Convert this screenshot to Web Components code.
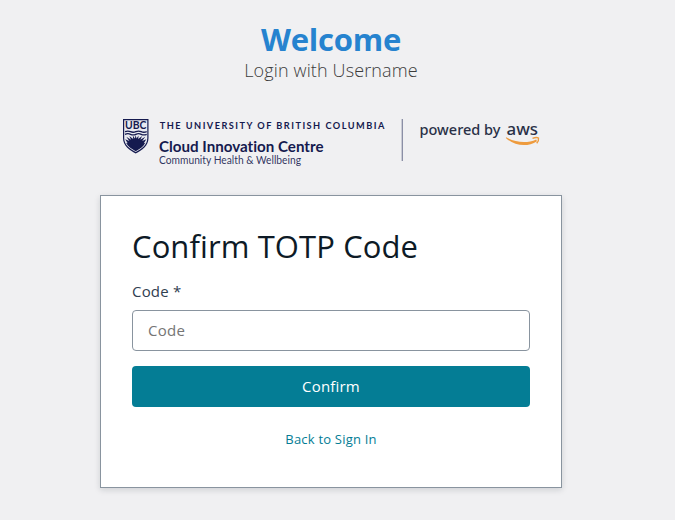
<!DOCTYPE html>
<html lang="en"><head><meta charset="utf-8"><title>Confirm TOTP Code</title>
<style>html,body{margin:0;height:100%;overflow:hidden}body{background:#f0f0f2;font-family:"Open Sans","Noto Sans",sans-serif}</style></head>
<body>
<login-page>
  <page-heading slot="head"><span>Welcome</span><span slot="sub">Login with Username</span></page-heading>
  <brand-banner slot="brand"></brand-banner>
  <auth-card>
    <span slot="title">Confirm TOTP Code</span>
    <text-field label="Code *" placeholder="Code"></text-field>
    <primary-button>Confirm</primary-button>
    <link-button>Back to Sign In</link-button>
  </auth-card>
</login-page>
<script>
const define=(name,html,setup)=>customElements.define(name,class extends HTMLElement{
  constructor(){super();this.attachShadow({mode:'open'}).innerHTML=html;}
  connectedCallback(){if(setup)setup(this,this.shadowRoot);}
});
define('login-page',`<style>
:host{display:flex;flex-direction:column;align-items:center;width:662px;height:520px;box-sizing:border-box;padding-top:20px}
</style><slot name="head"></slot><slot name="brand"></slot><slot></slot>`);
define('page-heading',`<style>
:host{display:block;text-align:center;height:90px}
h1{margin:0;font-size:31px;line-height:39px;font-weight:700;color:#2683cf;letter-spacing:-.2px}
p{margin:0;font-size:18px;line-height:23px;font-weight:300;color:#3c3c3c;letter-spacing:.13px}
</style><h1><slot></slot></h1><p><slot name="sub"></slot></p>`);
define('brand-banner',`<style>
:host{display:block;width:432px;height:85px}svg{display:block}
.u{fill:#151a4f;font-family:Lato,"Open Sans",sans-serif;font-variant-ligatures:none}.a{fill:#2a3147;font-family:"Noto Sans","Open Sans",sans-serif}
</style><svg width="430" height="60" viewBox="115 110 430 60">
<path d="M123 119H148.500V138C148.500 146 142 150 135.700 153.500C129.500 150 123 146 123 138Z" fill="#151a4f"/>
<path d="M124.200 120.200H147.300V138C147.300 145 141.500 148.900 135.700 152C130 148.900 124.200 145 124.200 138Z" fill="#e9eaf0"/>
<text class="u" x="125" y="129" font-size="10.500" font-weight="700" textLength="21.400" lengthAdjust="spacingAndGlyphs">UBC</text>
<g fill="none" stroke="#151a4f" stroke-width="1.300"><path d="M125 131.700Q128 130.600 130.500 131.700T135.800 131.700T141.200 131.700T146.700 131.700"/><path d="M125 134.300Q128 133.100 130.500 134.300T135.800 134.300T141.200 134.300T146.700 134.300"/></g>
<path fill="#151a4f" d="M125.200 139.200L129.300 141L126.300 136.800L131 139.700L129.300 135.900L133.200 139L132.800 135.400L134.900 138.500L135.700 134.900L136.500 138.500L138.600 135.400L138.200 139L142.100 135.900L140.400 139.700L145.200 136.800L142.200 141L146.300 139.200L143.800 143.200L145.300 142.800C143.500 146.700 139.500 149.100 135.700 151.200C132 149.100 128 146.700 126.100 142.800L127.700 143.200Z"/>
<text class="u" x="159.800" y="128.800" font-size="9.200" font-weight="700" textLength="224.500">THE UNIVERSITY OF BRITISH COLUMBIA</text>
<text class="u" x="159" y="151.800" font-size="14.800" font-weight="700" textLength="164.500" lengthAdjust="spacingAndGlyphs">Cloud Innovation Centre</text>
<text class="u" x="159" y="164" font-size="10.600" textLength="142" lengthAdjust="spacingAndGlyphs" fill-opacity=".9">Community Health &amp; Wellbeing</text>
<path d="M402.300 119V161" stroke="#858aa2" stroke-width="1.300"/>
<text class="a" x="419.500" y="135" font-size="14.300" font-weight="550" textLength="81" lengthAdjust="spacingAndGlyphs">powered by</text>
<text class="a" x="506.500" y="135" font-size="17" font-weight="550" textLength="31.500" lengthAdjust="spacingAndGlyphs">aws</text>
<path d="M505.800 138C514 145.500 527 147.800 537 141.200L536.200 139.500C527 143.800 515 142.500 506.200 137.300Z" fill="#ee9b3e"/>
<path d="M532.500 138.300Q536.500 136.900 538.500 138Q539 140.500 536.700 143.300" fill="none" stroke="#ee9b3e" stroke-width="1.400"/>
</svg>`);
define('auth-card',`<style>
:host{display:flex;flex-direction:column;width:462px;height:293px;box-sizing:border-box;border:1px solid #89949f;background:#fff;padding:31px;box-shadow:0 2px 6px rgba(13,26,38,.15)}
h2{margin:0 0 13px;font-size:31px;line-height:38px;font-weight:400;color:#0d1a26;white-space:nowrap;letter-spacing:.1px}
</style><h2><slot name="title"></slot></h2><slot></slot>`);
define('text-field',`<style>
:host{display:flex;flex-direction:column;gap:7px}
label{font-size:15px;line-height:24px;height:24px;color:#304050;margin-top:1px;letter-spacing:.2px}
input{font:400 15px/22px "Open Sans","Noto Sans",sans-serif;letter-spacing:.3px;height:41px;box-sizing:border-box;width:398px;border:1px solid #89949f;border-radius:4px;padding:0 15px 1px;background:#fff;outline:0}
input::placeholder{color:#757575;opacity:1}
</style><label for="f"></label><input id="f">`,(el,root)=>{
  root.querySelector('label').textContent=el.getAttribute('label');
  root.querySelector('input').placeholder=el.getAttribute('placeholder');
});
define('primary-button',`<style>
:host{display:block;margin-top:15px}
button{display:block;width:398px;height:41px;border:0;border-radius:4px;padding:0 0 1px;background:#047d95;color:#fff;font:500 15px/24px "Open Sans","Noto Sans",sans-serif;letter-spacing:.2px}
</style><button><slot></slot></button>`);
define('link-button',`<style>
:host{display:flex;justify-content:center;margin-top:22px}
button{border:0;padding:0;background:none;color:#047d95;font:400 13px/21px "Open Sans","Noto Sans",sans-serif;letter-spacing:.2px}
</style><button><slot></slot></button>`);
</script>
</body></html>
